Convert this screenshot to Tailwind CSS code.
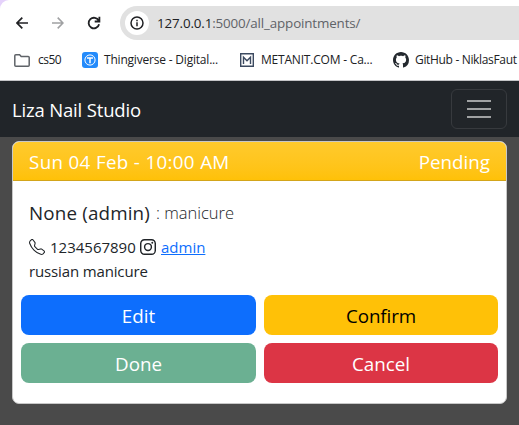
<!DOCTYPE html>
<html lang="en">
<head>
<meta charset="utf-8">
<title>Liza Nail Studio</title>
<script src="https://cdn.jsdelivr.net/npm/@tailwindcss/browser@4"></script>
</head>
<body class="w-[519px] h-[425px] overflow-hidden bg-[#4a4a4a] font-['Open_Sans','Noto_Sans',sans-serif] text-[#212529] whitespace-nowrap">
<div class="bg-[#e5d2fb]">
<header class="h-[81px] bg-white rounded-tl-[9px] border-b border-[#c4c5c7] pt-1.5 overflow-hidden">
  <div class="h-[34px] flex items-center">
    <svg class="ml-4 w-3 h-3 shrink-0" viewBox="0 0 12 12" fill="none" stroke="#202124" stroke-width="1.7"><path d="M12 6H1M6.3.6L1 6l5.3 5.4"/></svg>
    <svg class="ml-6 w-3 h-3 shrink-0" viewBox="0 0 12 12" fill="none" stroke="#a0a1a3" stroke-width="1.6"><path d="M0 6h11M5.7.6L11 6l-5.3 5.4"/></svg>
    <svg class="ml-[23px] w-[14px] h-[14px] shrink-0" viewBox="0 0 14 14" fill="none" stroke="#202124" stroke-width="1.8"><path d="M12.1 8.3A5.3 5.3 0 1 1 11.7 4.7M12.4.8v4.7H7.7"/></svg>
    <div class="ml-[19px] w-[420px] shrink-0 h-[34px] rounded-l-full bg-[#e1e1e1] flex items-center pl-[5px]">
      <div class="w-6 h-6 rounded-full bg-white flex items-center justify-center">
        <svg class="w-[14px] h-[14px]" viewBox="0 0 14 14" fill="none" stroke="#202124" stroke-width="1.5"><circle cx="7" cy="7" r="6"/><path d="M7 6.2v4M7 3.7v1.5"/></svg>
      </div>
      <div class="ml-2 text-[13.4px] tracking-[-.15px] text-[#5f6368]"><span class="text-[#202124]">127.0.0.1</span>:5000/all_appointments/</div>
    </div>
  </div>
  <div class="h-10 flex items-center text-[12px] text-[#202124]">
    <div class="flex items-center w-[68px] pl-[14px] shrink-0">
      <svg class="w-4 h-[13px]" viewBox="0 0 16 13" fill="none" stroke="#5f6368" stroke-width="1.5" stroke-linejoin="round"><path d="M.8 1.8q0-1 1-1h3.8l1.6 1.7h7q1 0 1 1v7.7q0 1-1 1H1.800q-1 0-1-1z"/></svg>
      <span class="ml-2 tracking-[-.5px]">cs50</span>
    </div>
    <div class="flex items-center w-[158px] pl-[14px] shrink-0">
      <svg class="w-4 h-4" viewBox="0 0 16 16"><rect width="16" height="16" rx="3" fill="#248bfb"/><circle cx="8" cy="8" r="5.1" fill="none" stroke="#fff"/><path d="M5 6.1h6M8 6.200v5" stroke="#fff" stroke-width="1.5"/></svg>
      <span class="ml-[6px] tracking-[-.2px]">Thingiverse - Digital...</span>
    </div>
    <div class="flex items-center w-[153px] pl-[14px] shrink-0">
      <svg class="w-[14px] h-[14px]" viewBox="0 0 14 14" fill="none" stroke="#3c4a60"><path stroke-width="1.4" d="M.7.7h12.600v12.600H.7z"/><path stroke-width="1.400" d="M3.500 11V4.200L7 7.700l3.500-3.500V11"/></svg>
      <span class="ml-[7px] tracking-[-.2px]">METANIT.COM - Ca...</span>
    </div>
    <div class="flex items-center pl-[14px] shrink-0">
      <svg class="w-4 h-4" viewBox="0 0 16 16" fill="#24292f"><path d="M8 0C3.580 0 0 3.580 0 8c0 3.540 2.290 6.530 5.470 7.590.4.070.55-.17.55-.38 0-.19-.01-.82-.01-1.490-2.010.37-2.530-.49-2.690-.94-.09-.23-.48-.94-.82-1.130-.28-.15-.68-.52-.01-.53.63-.01 1.080.58 1.230.82.72 1.210 1.870.87 2.330.66.07-.52.28-.87.51-1.070-1.780-.2-3.640-.89-3.640-3.950 0-.87.31-1.590.82-2.150-.08-.2-.36-1.020.08-2.120 0 0 .67-.21 2.200.82.64-.18 1.320-.27 2-.27s1.360.09 2 .27c1.530-1.040 2.200-.82 2.200-.82.44 1.100.16 1.920.08 2.120.51.56.82 1.270.82 2.150 0 3.070-1.870 3.750-3.650 3.950.29.25.54.73.54 1.480 0 1.070-.01 1.930-.01 2.200 0 .21.15.46.55.38A8 8 0 0 0 16 8c0-4.420-3.580-8-8-8z"/></svg>
      <span class="ml-[6px] tracking-[-.33px]">GitHub - NiklasFaut</span>
    </div>
  </div>
</header>
</div>
<nav class="h-14 bg-[#212529] flex items-center justify-between px-3">
  <span class="text-[18.500px] tracking-[-.17px] pt-0.5 text-white">Liza Nail Studio</span>
  <button class="w-14 h-10 rounded-md border border-[#373a3e] flex items-center justify-center">
    <svg class="w-[30px] h-[30px]" viewBox="0 0 30 30" stroke="#a0a2a3" stroke-width="2"><path d="M3 7h24M3 15h24M3 23h24"/></svg>
  </button>
</nav>
<main class="px-3 pt-1">
  <section class="h-[263px] rounded-[7px] bg-white border border-[#c8c8c8] overflow-hidden">
    <div class="h-[39px] pl-4 pr-4 pt-0.5 flex items-center justify-between border-b border-[#d3a51a] bg-linear-to-b from-[#ffca2c] to-[#ffc107] text-white text-[18.800px] font-medium">
      <h5 class="tracking-[.33px]">Sun 04 Feb - 10:00 AM</h5><span>Pending</span>
    </div>
    <div class="px-4 pt-4 h-[114px]">
      <div class="h-8 flex items-center"><span class="w-[121px] text-[18.800px] tracking-[.16px]">None (admin)</span><span class="ml-[6px] text-[16.500px] font-light">: manicure</span></div>
      <div class="mt-1.5 h-6 flex items-center text-[15px]">
        <svg class="w-4 h-4" viewBox="0 0 16 16" fill="currentColor"><path d="M3.654 1.328a.678.678 0 0 0-1.015-.063L1.605 2.300c-.483.484-.661 1.169-.45 1.770a17.600 17.600 0 0 0 4.168 6.608 17.600 17.600 0 0 0 6.608 4.168c.601.211 1.286.033 1.770-.45l1.034-1.034a.678.678 0 0 0-.063-1.015l-2.307-1.794a.68.68 0 0 0-.58-.122l-2.190.547a1.750 1.750 0 0 1-1.657-.459L5.482 8.062a1.750 1.750 0 0 1-.46-1.657l.548-2.190a.68.68 0 0 0-.122-.58zM1.884.511a1.745 1.745 0 0 1 2.612.163L6.290 2.980c.329.423.445.974.315 1.494l-.547 2.190a.68.68 0 0 0 .178.643l2.457 2.457a.68.68 0 0 0 .644.178l2.189-.547a1.750 1.750 0 0 1 1.494.315l2.306 1.794c.829.645.905 1.870.163 2.611l-1.034 1.034c-.74.74-1.846 1.065-2.877.702a18.600 18.600 0 0 1-7.010-4.420 18.600 18.600 0 0 1-4.420-7.009c-.362-1.030-.037-2.137.703-2.877z"/></svg>
        <span class="ml-[5px] w-[90px]">1234567890</span>
        <svg class="w-4 h-4" viewBox="0 0 16 16" fill="none" stroke="currentColor" stroke-width="1.450"><rect x=".72" y=".72" width="14.560" height="14.560" rx="3.900"/><circle cx="8" cy="8" r="3.400"/><circle cx="12.270" cy="3.730" r=".96" fill="currentColor" stroke="none"/></svg>
        <a class="ml-[5px] text-[#0d6efd] underline">admin</a>
      </div>
      <div class="h-6 flex items-center text-[15px] tracking-[-.14px]">russian manicure</div>
    </div>
    <div class="grid grid-cols-[235px_234px] gap-2 px-2 text-[18.800px] text-white">
      <button class="h-10 pt-0.5 rounded-lg bg-[#0d6efd]">Edit</button>
      <button class="h-10 pt-0.5 rounded-lg bg-[#ffc107] text-black tracking-[-.1px]">Confirm</button>
      <button class="h-10 pt-0.5 rounded-lg bg-[#6bb092]">Done</button>
      <button class="h-10 pt-0.5 rounded-lg bg-[#dc3545]">Cancel</button>
    </div>
  </section>
</main>
</body>
</html>
